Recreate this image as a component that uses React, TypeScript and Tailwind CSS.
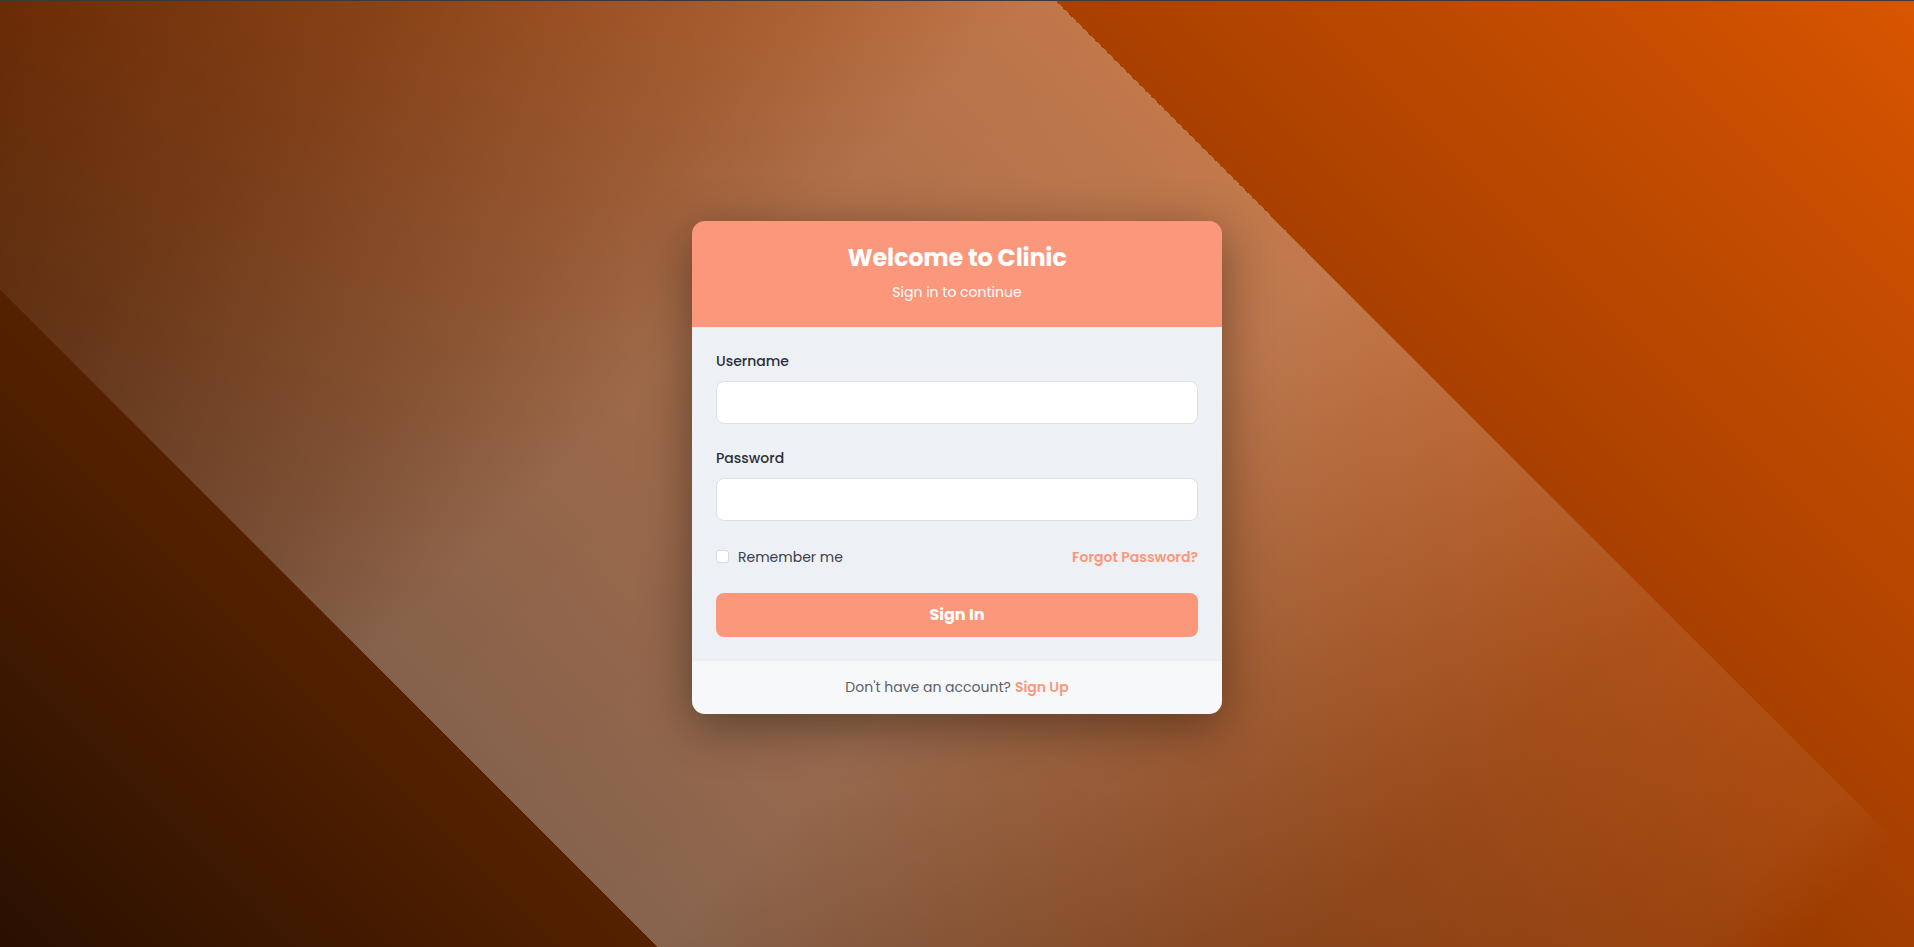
import React from "react";

export default function App() {
  return (
    <div className="relative min-h-screen w-full overflow-hidden border-t border-[#3a3a3a] bg-[linear-gradient(45deg,#2a1000_0%,#552100_23%,#a84000_70%,#d85500_100%)] font-['Poppins','Inter',sans-serif]">
      <div
        aria-hidden
        className="pointer-events-none absolute inset-0 bg-[linear-gradient(135deg,rgba(255,255,255,0.02)_0%,rgba(255,255,255,0.09)_14%,rgba(255,255,255,0.2)_28%,rgba(255,255,255,0.29)_36%,rgba(255,255,255,0.3)_56%,rgba(255,255,255,0.1)_79%,rgba(255,255,255,0.06)_92%,rgba(255,255,255,0)_96%)] [mask-image:linear-gradient(45deg,transparent_23%,black_23%,black_70%,transparent_70%)] [-webkit-mask-image:linear-gradient(45deg,transparent_23%,black_23%,black_70%,transparent_70%)]"
      />
      <div className="relative flex min-h-[946px] items-center justify-center pb-[14px]">
        <div className="w-[530px] overflow-hidden rounded-[13px] shadow-[0_12px_50px_rgba(0,0,0,0.4)]">
          <div className="bg-[#fb977b] px-6 pb-[25px] pt-6 text-center text-white">
            <h1 className="text-[24px] font-bold leading-[26px] tracking-[-0.2px]">Welcome to Clinic</h1>
            <p className="mt-[11px] text-[14px] leading-5">Sign in to continue</p>
          </div>
          <div className="bg-[#edf0f5] px-6 pb-6 pt-6">
            <label className="block text-[14px] font-medium leading-5 text-[#2b2f38]">Username</label>
            <input
              type="text"
              className="mt-[10px] block h-[43px] w-full rounded-lg border border-[#dde1e7] bg-white px-3 text-[14px] outline-none"
            />
            <label className="mt-6 block text-[14px] font-medium leading-5 text-[#2b2f38]">Password</label>
            <input
              type="password"
              className="mt-[10px] block h-[43px] w-full rounded-lg border border-[#dde1e7] bg-white px-3 text-[14px] outline-none"
            />
            <div className="mt-[26px] flex h-5 items-center justify-between">
              <label className="flex items-center gap-[9px] text-[14px] leading-5 text-[#3a3f48]">
                <input
                  type="checkbox"
                  className="h-[13px] w-[13px] appearance-none rounded-[3px] border border-[#d7dbe1] bg-white"
                />
                Remember me
              </label>
              <a className="text-[14px] font-semibold leading-5 text-[#fb977b]" href="#">
                Forgot Password?
              </a>
            </div>
            <button className="mt-[26px] flex h-[44px] w-full items-center justify-center rounded-lg bg-[#fb977b] text-[16px] font-bold text-white">
              Sign In
            </button>
          </div>
          <div className="flex h-[53px] items-center justify-center bg-[#f6f8fa] text-[14px] leading-5 text-[#5c616b]">
            <span>Don't have an account?</span>
            <a className="ml-1 font-semibold text-[#fb977b]" href="#">
              Sign Up
            </a>
          </div>
        </div>
      </div>
    </div>
  );
}
